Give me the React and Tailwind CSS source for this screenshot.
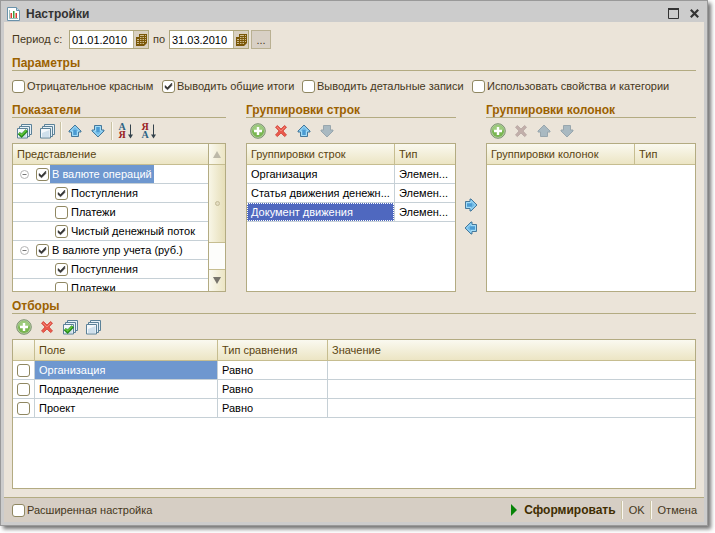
import React from "react";

function Check({ label, defaultChecked, hideLabel, textClass = "pl-0.5", className = "" }) {
  return (
    <label className={`flex items-center ${className}`}>
      <span className="grid size-[13px] shrink-0">
        <input
          type="checkbox"
          defaultChecked={defaultChecked}
          aria-label={hideLabel ? label : undefined}
          className="peer m-0 size-[13px] appearance-none rounded-[3px] border border-[#8f8761] bg-white [grid-area:1/1]"
        />
        <svg viewBox="0 0 13 13" className="pointer-events-none invisible size-[13px] peer-checked:visible [grid-area:1/1]">
          <path d="M3 5.5 L5.5 7.5 L9.8 3 V5.6 L5.6 9.8 L3 7.6 Z" fill="#333" stroke="#333" strokeWidth="0.5" />
        </svg>
      </span>
      {!hideLabel && <span className={`whitespace-nowrap ${textClass}`}>{label}</span>}
    </label>
  );
}

function Heading({ children }) {
  return (
    <h2 className="h-4 truncate border-b border-[#b3ab82] text-[12px] leading-4 font-bold text-[#9b6100]">{children}</h2>
  );
}

function Tool({ label, disabled, children }) {
  return (
    <button type="button" aria-label={label} disabled={disabled} className="flex h-[25px] w-[23px] shrink-0 items-center justify-center">
      {children}
    </button>
  );
}

function Separator() {
  return (
    <span className="flex h-[18px] w-[5px] shrink-0 justify-center">
      <span className="w-px bg-[#c9c2a4]" />
      <span className="w-px bg-[#fbf9f0]" />
    </span>
  );
}

function Toolbar({ children }) {
  return <div className="flex h-[25px] items-center">{children}</div>;
}

function StackIcon({ checked }) {
  return (
    <svg viewBox="-1 0 16 16" className="size-4 overflow-visible">
      <path d="M4.5 1.5H14.5V11.5H4.5Z" fill="#e6f0f6" stroke="#5b8198" />
      <path d="M2.5 3.5H12.5V13.5H2.5Z" fill="#e6f0f6" stroke="#5b8198" />
      <path d="M0.5 5.5H10.5V15H0.5Z" fill="#f4f8fb" stroke="#5b8198" />
      <path d="M2 10L9.5 7V14H2Z" fill="#cfe0ec" />
      {checked && <path d="M1.8 10.2L4.6 12.8L9.8 7.4" fill="none" stroke="#248a1c" strokeWidth="3.2" />}
      {checked && <path d="M2.2 10L4.6 12L9.4 7.2" fill="none" stroke="#63c83a" strokeWidth="1.3" />}
    </svg>
  );
}

const ARROW_TURN = { up: "", down: "rotate-180", right: "rotate-90", left: "-rotate-90" };

function ArrowIcon({ direction, disabled }) {
  return (
    <svg viewBox="0 0 14 14" className={`size-[14px] ${ARROW_TURN[direction]}`}>
      <path
        d="M7 1L13 7V8H10.5V12.5H3.5V8H1V7Z"
        fill={disabled ? "#a9b9c1" : "#6fb9e6"}
        stroke={disabled ? "#98a6ad" : "#46789a"}
        strokeLinejoin="round"
      />
      {!disabled && <path d="M7 2.5L11.3 7H9.5V11.5H4.5V7H2.7Z" fill="none" stroke="#a9e0f8" strokeWidth="0.9" />}
      {!disabled && <path d="M5.5 6H8.5V11H5.5Z" fill="#4b9bd2" />}
    </svg>
  );
}

function AddIcon() {
  return (
    <svg viewBox="0 0 16 16" className="size-4">
      <circle cx="8" cy="8" r="7.3" fill="#b4cfa0" stroke="#7d9370" />
      <circle cx="8" cy="8" r="6" fill="#79b650" />
      <path d="M2.4 7.5A5.6 5.6 0 0 1 13.6 7.5Z" fill="#9dcb7d" />
      <path d="M6.8 4H9.2V6.8H12V9.2H9.2V12H6.8V9.2H4V6.8H6.8Z" fill="#fff" />
    </svg>
  );
}

function DeleteIcon({ disabled }) {
  return (
    <svg viewBox="0 0 14 14" className="size-[14px]">
      <path
        d="M1.5 3.2L3.4 1.5L7 5L10.6 1.5L12.5 3.2L9 7L12.5 11L10.6 12.6L7 9L3.4 12.6L1.5 11L5 7Z"
        fill={disabled ? "#c2afaa" : "#ea5a4c"}
        stroke={disabled ? "#b5a5a1" : "#cf4238"}
        strokeWidth="0.8"
      />
      {!disabled && <path d="M3 3L7 7L11 3" fill="none" stroke="#f59083" strokeWidth="0.8" />}
    </svg>
  );
}

function SortIcon({ top, bottom, topColor, bottomColor }) {
  return (
    <span className="flex">
      <span className="flex w-2 flex-col font-['Liberation_Serif',serif] text-[10px] leading-2 font-bold">
        <span className={topColor}>{top}</span>
        <span className={bottomColor}>{bottom}</span>
      </span>
      <svg viewBox="0 0 6 16" className="ml-px h-4 w-1.5">
        <path d="M3.5 1.5V14" stroke="#34424c" />
        <path d="M1 11.5H6L3.5 15.5Z" fill="#34424c" />
      </svg>
    </span>
  );
}

function CalendarIcon() {
  return (
    <svg viewBox="0 0 11 12" className="h-3 w-[11px]">
      <path d="M3 0H11V9L8 12H0V3H3Z" fill="#7a5708" />
      <path d="M1 5.5H8M1 7.5H8M1 9.5H8M4 1.5H10M4 3.5H10M9 5.5H10M9 7.5H10" stroke="#e2d7b6" strokeWidth="0.8" />
      <path d="M3.5 4V12M6 3V12M8.5 1V9" stroke="#7a5708" />
    </svg>
  );
}

function DateField({ label, value }) {
  return (
    <div className="flex h-[19px] w-20 border border-[#aea67c] bg-white">
      <input type="text" aria-label={label} defaultValue={value} className="min-w-0 flex-1 px-0.5 text-[11px] leading-4 text-black outline-none" />
      <button type="button" aria-label="Календарь" className="flex w-[15px] items-center justify-center border-l border-[#b9b28e] bg-[#d9d1c2]">
        <CalendarIcon />
      </button>
    </div>
  );
}

const panel = "overflow-hidden border border-[#b3ab82] bg-white";
const headCell = "h-[21px] truncate border-b border-[#c6bd90] bg-linear-to-b from-[#faf9f0] to-[#ece5c4] p-0 px-1 text-left font-normal text-[#5a4410]";
const cell = "h-[19px] truncate border-b border-[#c6d0d6] p-0 pl-1";

function GroupTable({ title, rows }) {
  return (
    <div className={`h-[149px] ${panel}`}>
      <table className="w-full table-fixed border-separate border-spacing-0">
        <colgroup>
          <col />
          <col className="w-[60px]" />
        </colgroup>
        <thead>
          <tr>
            <th className={`${headCell} border-r`}>{title}</th>
            <th className={headCell}>Тип</th>
          </tr>
        </thead>
        <tbody>
          {rows.map((row) => (
            <tr key={row.name} className="text-black">
              {row.selected ? (
                <td className="h-[19px] border-r border-b border-[#c6d0d6] p-0">
                  <div className="h-[18px] truncate border border-dotted border-white bg-[#4f68bf] px-[3px] leading-4 text-white">{row.name}</div>
                </td>
              ) : (
                <td className={`${cell} border-r`}>{row.name}</td>
              )}
              <td className={cell}>Элемен...</td>
            </tr>
          ))}
        </tbody>
      </table>
    </div>
  );
}

const TREE = [
  { label: "В валюте операций", group: true, checked: true, selected: true },
  { label: "Поступления", checked: true },
  { label: "Платежи", checked: false },
  { label: "Чистый денежный поток", checked: true },
  { label: "В валюте упр учета (руб.)", group: true, checked: true },
  { label: "Поступления", checked: true },
  { label: "Платежи", checked: false },
];

function IndicatorTree() {
  return (
    <div className={`flex h-[149px] ${panel}`}>
      <div className="min-w-0 flex-1 overflow-hidden">
        <table className="w-full table-fixed border-separate border-spacing-0">
          <thead>
            <tr>
              <th className={headCell}>Представление</th>
            </tr>
          </thead>
          <tbody>
            {TREE.map((row, index) => (
              <tr key={index} className="text-black">
                <td className="h-[19px] border-b border-[#c6d0d6] p-0">
                  {row.group ? (
                    <div className="flex h-[18px] items-center pl-[7px]">
                      <button type="button" aria-label="Свернуть" className="w-4 shrink-0">
                        <svg viewBox="0 0 9 9" className="size-[9px]">
                          <circle cx="4.5" cy="4.5" r="4" fill="#fff" stroke="#b5b5b5" />
                          <path d="M2.5 4.5H6.5" stroke="#777" />
                        </svg>
                      </button>
                      <Check
                        label={row.label}
                        defaultChecked={row.checked}
                        textClass={row.selected ? "ml-px bg-[#6e97cf] px-0.5 leading-[18px] text-white" : "pl-[3px]"}
                      />
                    </div>
                  ) : (
                    <Check label={row.label} defaultChecked={row.checked} textClass="pl-[3px]" className="h-[18px] pl-[42px]" />
                  )}
                </td>
              </tr>
            ))}
          </tbody>
        </table>
      </div>
      <div className="flex w-[17px] shrink-0 flex-col border-l border-[#b3ab82]">
        <button type="button" aria-label="Вверх" className="flex h-[21px] items-center justify-center border-b border-[#c6bd90] bg-linear-to-r from-[#faf9f0] to-[#ece5c4]">
          <svg viewBox="0 0 8 7" className="h-[7px] w-2"><path d="M4 0L8 7H0Z" fill="#bdb9a9" /></svg>
        </button>
        <div className="flex h-[78px] items-center justify-center border-b border-[#c6bd90] bg-linear-to-r from-[#f8f6e6] to-[#e6deb8]">
          <span className="size-[5px] rounded-full border border-[#c3bb98] bg-[#e3dcc0]" />
        </div>
        <div className="flex-1 bg-[#fdfdfb]" />
        <button type="button" aria-label="Вниз" className="flex h-[22px] items-center justify-center border-t border-[#c6bd90] bg-linear-to-r from-[#faf9f0] to-[#ece5c4]">
          <svg viewBox="0 0 8 7" className="h-[7px] w-2"><path d="M0 0H8L4 7Z" fill="#77746c" /></svg>
        </button>
      </div>
    </div>
  );
}

const ROW_GROUPS = [
  { name: "Организация" },
  { name: "Статья движения денежн..." },
  { name: "Документ движения", selected: true },
];

const FILTERS = [{ field: "Организация", selected: true }, { field: "Подразделение" }, { field: "Проект" }];

export default function App() {
  return (
    <div className="flex h-screen flex-col bg-white pr-[7px] pb-[7px] font-['Liberation_Sans',Arial,sans-serif] text-[11px] leading-[13px] text-[#45371b]">
      <main className="flex min-h-0 flex-1 flex-col border border-[#999] bg-[#ccc] px-[3px] pb-[3px] shadow-[3px_3px_4px_rgba(0,0,0,0.55)]">
        <header className="flex h-[21px] shrink-0 items-center pr-[5px] pl-[3px]">
          <svg viewBox="0 0 13 14" className="mt-1 h-[14px] w-[13px]">
            <path d="M0.5 0.5H9.5L12.5 3.5V13.5H0.5Z" fill="#fff" stroke="#6a92aa" />
            <path d="M9.5 0.5V3.5H12.5" fill="#c4dbe8" stroke="#6a92aa" />
            <path d="M2.5 3V11.5H11" fill="none" stroke="#9bb" />
            <path d="M3.5 6H5V11H3.5ZM8.5 6H10V11H8.5Z" fill="#db3a31" />
            <path d="M6 4H7.5V11H6Z" fill="#3c9c40" />
          </svg>
          <h1 className="mt-1 flex-1 pl-1.5 text-[12px] leading-4 font-bold text-[#333]">Настройки</h1>
          <button type="button" aria-label="Развернуть" className="mt-1 mr-[11px]">
            <svg viewBox="0 0 11 11" className="block size-[11px]"><path d="M0.5 1V10.5H10.5V1" fill="none" stroke="#333" /><path d="M0 1H11" stroke="#333" strokeWidth="2" /></svg>
          </button>
          <button type="button" aria-label="Закрыть" className="mt-1">
            <svg viewBox="0 0 9 9" className="block size-[9px]"><path d="M0.8 0.8L8.2 8.2M8.2 0.8L0.8 8.2" stroke="#333" strokeWidth="2.2" /></svg>
          </button>
        </header>

        <div className="flex min-h-0 flex-1 flex-col bg-[#ebe4d9] px-2 pt-2 pb-2">
          <div className="flex h-[19px] shrink-0 items-center">
            <span className="w-[57px]">Период с:</span>
            <DateField label="Период с" value="01.01.2010" />
            <span className="w-5 text-center">по</span>
            <DateField label="Период по" value="31.03.2010" />
            <button type="button" aria-label="Выбрать период" className="ml-0.5 h-[19px] w-5 border border-[#b9b092] bg-[#d8d0c5] leading-4">...</button>
          </div>

          <div className="mt-1.5 shrink-0"><Heading>Параметры</Heading></div>
          <div className="mt-[9px] flex h-[13px] shrink-0">
            <Check label="Отрицательное красным" className="w-[150px]" />
            <Check label="Выводить общие итоги" defaultChecked className="w-[140px]" />
            <Check label="Выводить детальные записи" className="w-[170px]" />
            <Check label="Использовать свойства и категории" />
          </div>

          <div className="mt-[9px] grid shrink-0 grid-cols-[214fr_20px_210fr_30px_210fr]">
            <section className="min-w-0">
              <Heading>Показатели</Heading>
              <Toolbar>
                <Tool label="Установить все флажки"><StackIcon checked /></Tool>
                <Tool label="Снять все флажки"><StackIcon /></Tool>
                <Separator />
                <Tool label="Переместить вверх"><ArrowIcon direction="up" /></Tool>
                <Tool label="Переместить вниз"><ArrowIcon direction="down" /></Tool>
                <Separator />
                <Tool label="По возрастанию"><SortIcon top="А" bottom="Я" topColor="text-[#2d6385]" bottomColor="text-[#981b1e]" /></Tool>
                <Tool label="По убыванию"><SortIcon top="Я" bottom="А" topColor="text-[#981b1e]" bottomColor="text-[#2d6385]" /></Tool>
              </Toolbar>
              <IndicatorTree />
            </section>
            <section className="col-start-3 min-w-0">
              <Heading>Группировки строк</Heading>
              <Toolbar>
                <Tool label="Добавить"><AddIcon /></Tool>
                <Tool label="Удалить"><DeleteIcon /></Tool>
                <Tool label="Переместить вверх"><ArrowIcon direction="up" /></Tool>
                <Tool label="Переместить вниз" disabled><ArrowIcon direction="down" disabled /></Tool>
              </Toolbar>
              <GroupTable title="Группировки строк" rows={ROW_GROUPS} />
            </section>
            <div className="flex flex-col items-center pt-[91px]">
              <button type="button" aria-label="В колонки" className="flex h-[23px] items-center"><ArrowIcon direction="right" /></button>
              <button type="button" aria-label="В строки" className="flex h-[23px] items-center"><ArrowIcon direction="left" /></button>
            </div>
            <section className="min-w-0">
              <Heading>Группировки колонок</Heading>
              <Toolbar>
                <Tool label="Добавить"><AddIcon /></Tool>
                <Tool label="Удалить" disabled><DeleteIcon disabled /></Tool>
                <Tool label="Переместить вверх" disabled><ArrowIcon direction="up" disabled /></Tool>
                <Tool label="Переместить вниз" disabled><ArrowIcon direction="down" disabled /></Tool>
              </Toolbar>
              <GroupTable title="Группировки колонок" rows={[]} />
            </section>
          </div>

          <section className="mt-1.5 flex min-h-0 flex-1 flex-col">
            <Heading>Отборы</Heading>
            <Toolbar>
              <Tool label="Добавить"><AddIcon /></Tool>
              <Tool label="Удалить"><DeleteIcon /></Tool>
              <Tool label="Установить все флажки"><StackIcon checked /></Tool>
              <Tool label="Снять все флажки"><StackIcon /></Tool>
            </Toolbar>
            <div className={`min-h-0 flex-1 ${panel}`}>
              <table className="w-full table-fixed border-separate border-spacing-0">
                <colgroup>
                  <col className="w-[22px]" />
                  <col className="w-[183px]" />
                  <col className="w-[110px]" />
                  <col />
                </colgroup>
                <thead>
                  <tr>
                    <th className={`${headCell} border-r`} aria-label="Использование" />
                    <th className={`${headCell} border-r`}>Поле</th>
                    <th className={`${headCell} border-r`}>Тип сравнения</th>
                    <th className={headCell}>Значение</th>
                  </tr>
                </thead>
                <tbody>
                  {FILTERS.map((row) => (
                    <tr key={row.field} className="text-black">
                      <td className={`${cell} border-r`}><Check label={row.field} hideLabel /></td>
                      <td className={row.selected ? `${cell} border-r bg-[#6e97cf] bg-clip-padding text-white` : `${cell} border-r`}>{row.field}</td>
                      <td className={`${cell} border-r`}>Равно</td>
                      <td className={cell} />
                    </tr>
                  ))}
                </tbody>
              </table>
            </div>
          </section>
        </div>

        <footer className="flex h-[25px] shrink-0 items-center border-t border-[#b3ab82] bg-[#d6cec4] pr-[7px] pl-2">
          <Check label="Расширенная настройка" className="flex-1" />
          <button type="button" className="flex items-center pr-1 text-[12px] font-bold text-[#402d00]">
            <svg viewBox="0 0 6 12" className="mr-[7px] h-3 w-1.5"><path d="M0 0L6 6L0 12Z" fill="#078407" /></svg>
            Сформировать
          </button>
          <Separator />
          <button type="button" className="px-1">OK</button>
          <Separator />
          <button type="button" className="pl-1">Отмена</button>
        </footer>
      </main>
    </div>
  );
}
